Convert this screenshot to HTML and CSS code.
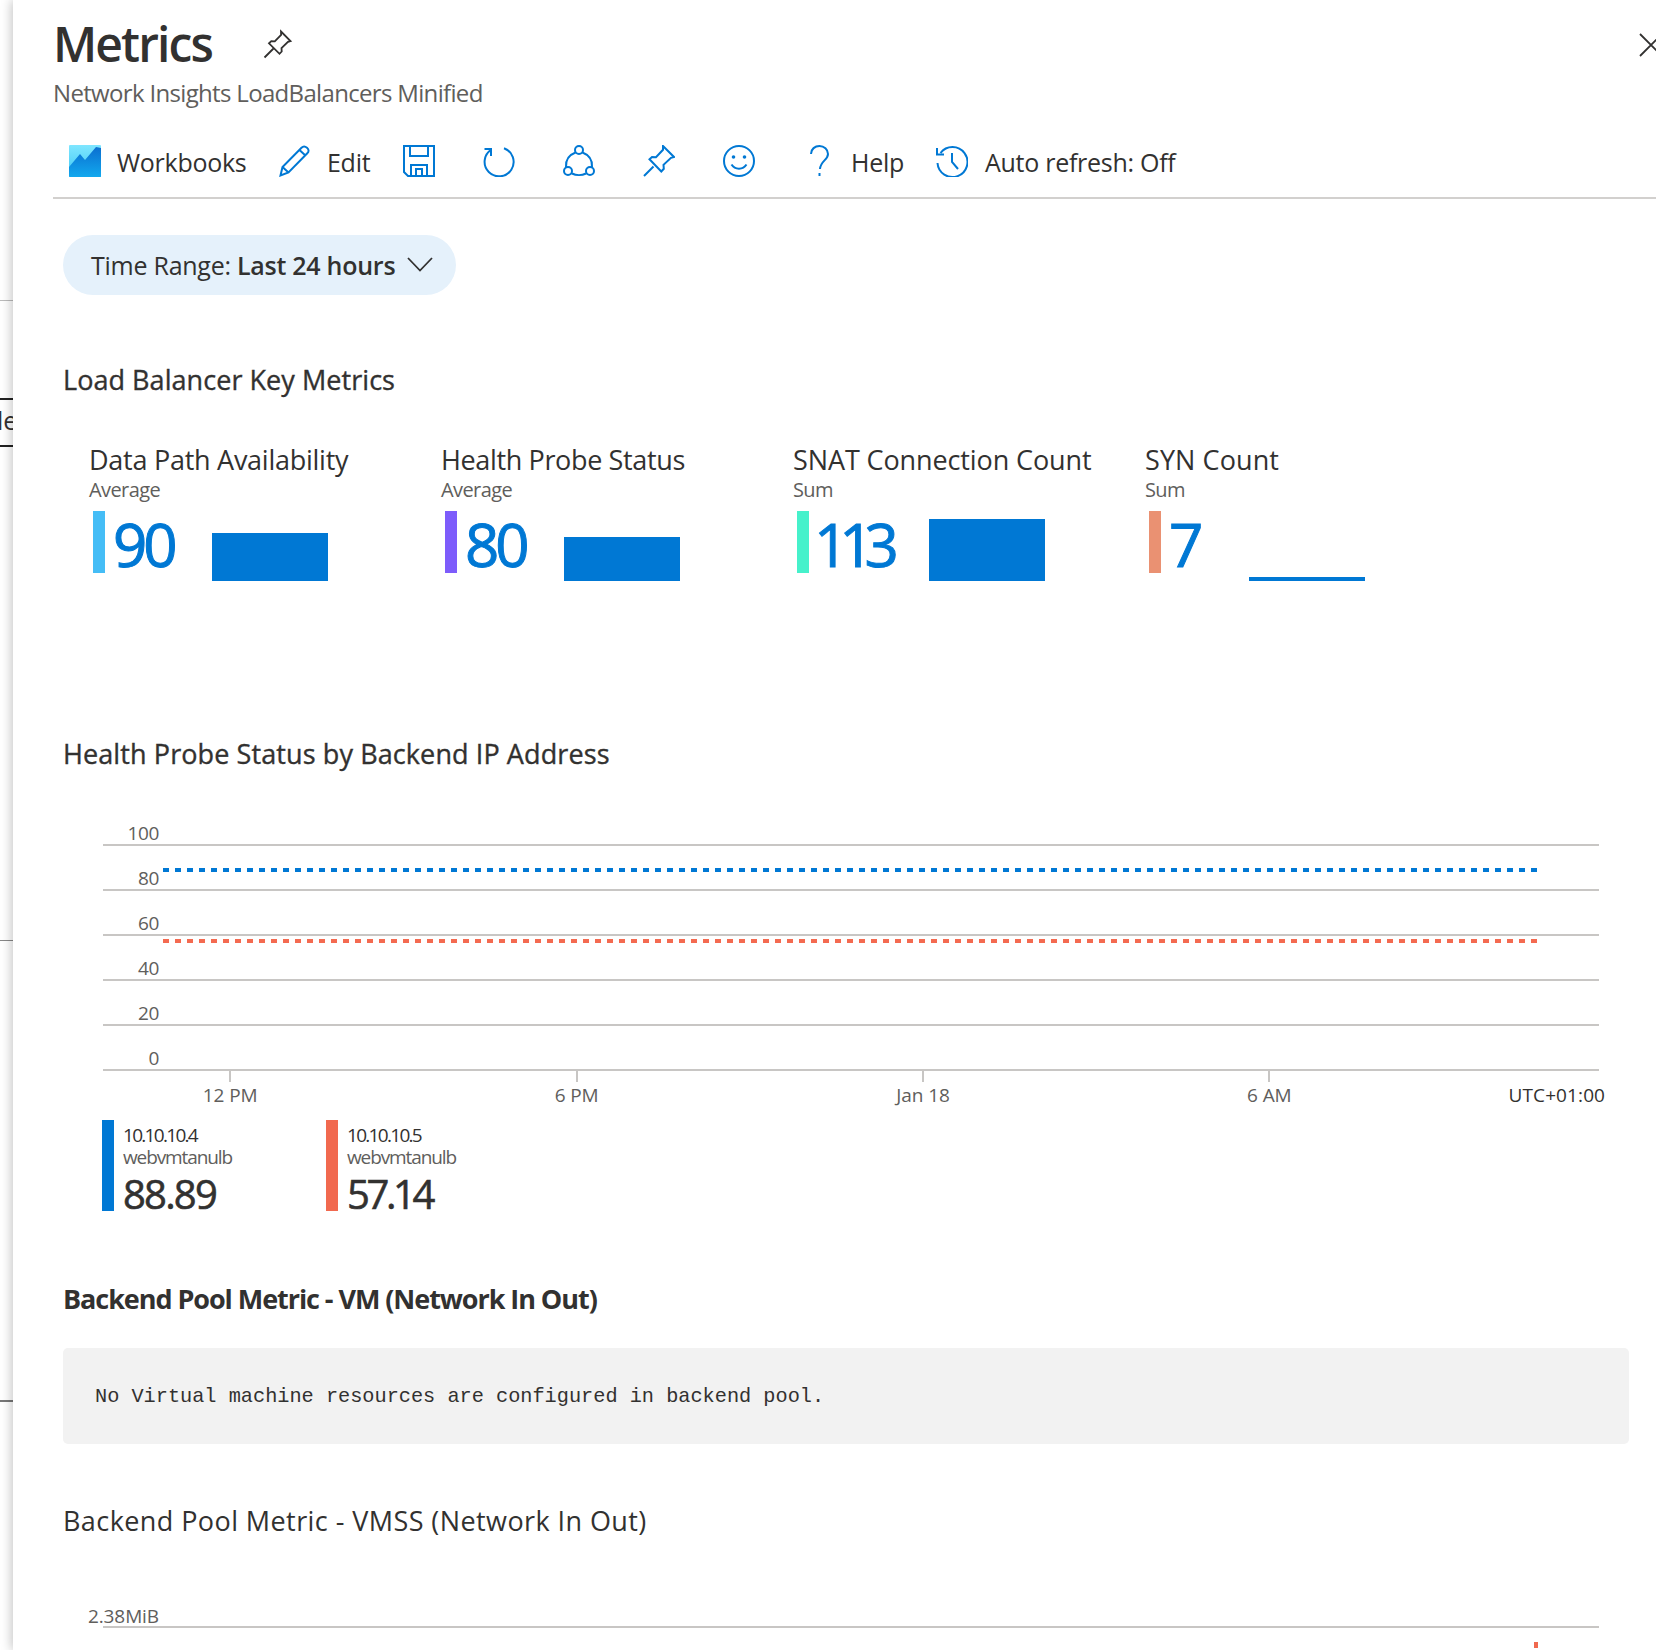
FILE: index.html
```html
<!DOCTYPE html>
<html lang="en">
<head>
<meta charset="utf-8">
<title>Metrics</title>
<link rel="stylesheet" href="styles.css">
</head>
<body>
<div class="page">
  <aside class="behind">
    <div class="rule rule-a"></div>
    <div class="rule rule-b"></div>
    <div class="behind-text">le</div>
    <div class="rule rule-c"></div>
    <div class="rule rule-d"></div>
    <div class="rule rule-e"></div>
  </aside>
  <main class="blade">
    <header class="head">
      <div class="title-row">
        <h1 class="title">Metrics</h1>
        <svg class="pin-title" viewBox="0 0 30 30"><path d="M1.5 28.5 10.5 19.500M18 2.500 27.500 12l-2.500.8-6.500 6.200.2 3.500-2.200 2.300-10.500-10.500 2.300-2.200 3.500.2 6.300-6.500z" fill="none" stroke="#323130" stroke-width="1.800"/></svg>
        <svg class="close" viewBox="0 0 24 24"><path d="M1 1 23 23M23 1 1 23" fill="none" stroke="#323130" stroke-width="1.800"/></svg>
      </div>
      <p class="subtitle">Network Insights LoadBalancers Minified</p>
    </header>
    <nav class="toolbar">
      <svg class="ic ic-wb" viewBox="0 0 32 32">
        <defs>
          <linearGradient id="wbtop" x1="0" y1="0" x2="0" y2="1"><stop offset="0" stop-color="#7fe6ff"/><stop offset="1" stop-color="#3cc8f4"/></linearGradient>
          <linearGradient id="wbbot" x1="0" y1="0" x2="0" y2="1"><stop offset="0" stop-color="#0b6fd0"/><stop offset="1" stop-color="#12a8ee"/></linearGradient>
        </defs>
        <path d="M1 0H31a1 1 0 0 1 1 1V32H1a1 1 0 0 1-1-1V1a1 1 0 0 1 1-1z" fill="url(#wbtop)"/>
        <path d="M0 22 11 9l5 6L27 2l5 1V31a1 1 0 0 1-1 1H1a1 1 0 0 1-1-1z" fill="url(#wbbot)"/>
      </svg>
      <span class="tb-text t-workbooks">Workbooks</span>
      <svg class="ic ic-edit" viewBox="0 0 32 32"><path d="M1.500 30.500 3.500 22 22.500 2.800c1.700-1.700 3.500-1.700 5.500 0s2 3.800 .3 5.500L9.500 27.500zM3.500 22l6 5.500M20.500 5l6.500 6" fill="none" stroke="#0078d4" stroke-width="2"/></svg>
      <span class="tb-text t-edit">Edit</span>
      <svg class="ic ic-save" viewBox="0 0 32 32"><path d="M1 1H31V31H5L1 27zM7 1V11H25V1M8 31V20H24V31M13 31V24H19V31" fill="none" stroke="#0078d4" stroke-width="2"/></svg>
      <svg class="ic ic-refresh" viewBox="0 0 32 32"><path d="M21 3.200A14.500 14.500 0 1 1 8.500 4.500M8 11V4H1.500" fill="none" stroke="#0078d4" stroke-width="2"/></svg>
      <svg class="ic ic-share" viewBox="0 0 32 32"><g fill="none" stroke="#0078d4" stroke-width="2"><circle cx="16" cy="5" r="4"/><circle cx="5" cy="26" r="4"/><circle cx="27" cy="26" r="4"/><path d="M9 28.500C13 30.500 19 30.500 23 28.500M3 22C2.500 15 6 10 12.500 7.500M29 22C29.500 15 26 10 19.500 7.500"/></g></svg>
      <svg class="ic ic-pin" viewBox="0 0 32 32"><path d="M1 31 10.500 21.500M20 1 31 12l-3 .8-7.500 7 .3 4-2.500 2.700L6.500 14.200 9 12l4 .3 7-7.500z" fill="none" stroke="#0078d4" stroke-width="2"/></svg>
      <svg class="ic ic-smile" viewBox="0 0 32 32"><g fill="none" stroke="#0078d4" stroke-width="2"><circle cx="16" cy="16" r="15"/><path d="M8.500 19.500c3.500 5.500 11.500 5.500 15 0"/></g><circle cx="10.500" cy="12" r="1.800" fill="#0078d4"/><circle cx="21.500" cy="12" r="1.800" fill="#0078d4"/></svg>
      <svg class="ic-help" viewBox="0 0 21 32"><path d="M2 9C2 4 6 1 10.500 1S19 4.500 19 9c0 6-7.500 7-8 15M10.500 28v3" fill="none" stroke="#0078d4" stroke-width="2"/></svg>
      <span class="tb-text t-help">Help</span>
      <svg class="ic ic-clock" viewBox="0 0 32 32"><path d="M4.500 8A15 15 0 1 1 1.500 18M1 3V9.500H8M16 8V17L22 24" fill="none" stroke="#0078d4" stroke-width="2"/></svg>
      <span class="tb-text t-auto">Auto refresh: Off</span>
    </nav>

    <section class="content">
      <div class="pill">
        <span class="pill-text">Time Range: <b>Last 24 hours</b></span>
        <svg class="chev" viewBox="0 0 26 15"><path d="M1 1 13 13.500 25 1" fill="none" stroke="#323130" stroke-width="1.800"/></svg>
      </div>

      <h2 class="heading h-key">Load Balancer Key Metrics</h2>
      <div class="tiles">
        <div class="tile">
          <div class="tile-title">Data Path Availability</div>
          <div class="tile-sub">Average</div>
          <div class="tile-row">
            <span class="accent a-sky"></span>
            <span class="val">90</span>
            <span class="spark s-90"></span>
          </div>
        </div>
        <div class="tile">
          <div class="tile-title tt-health">Health Probe Status</div>
          <div class="tile-sub">Average</div>
          <div class="tile-row">
            <span class="accent a-violet"></span>
            <span class="val">80</span>
            <span class="spark s-80"></span>
          </div>
        </div>
        <div class="tile">
          <div class="tile-title tt-snat">SNAT Connection Count</div>
          <div class="tile-sub">Sum</div>
          <div class="tile-row">
            <span class="accent a-mint"></span>
            <span class="val val-tight">113</span>
            <span class="spark s-113"></span>
          </div>
        </div>
        <div class="tile">
          <div class="tile-title tt-syn">SYN Count</div>
          <div class="tile-sub">Sum</div>
          <div class="tile-row">
            <span class="accent a-salmon"></span>
            <span class="val val-one">7</span>
            <span class="spark s-7"></span>
          </div>
        </div>
      </div>

      <h2 class="heading h-health">Health Probe Status by Backend IP Address</h2>
      <div class="chart chart-health">
        <div class="grid-row"><span>100</span></div>
        <div class="grid-row"><span>80</span></div>
        <div class="grid-row"><span>60</span></div>
        <div class="grid-row"><span>40</span></div>
        <div class="grid-row"><span>20</span></div>
        <div class="grid-row"><span>0</span></div>
        <div class="dots dots-blue"></div>
        <div class="dots dots-red"></div>
      </div>
      <div class="axis">
        <span class="tick">12 PM</span>
        <span class="tick">6 PM</span>
        <span class="tick">Jan 18</span>
        <span class="tick">6 AM</span>
        <span class="utc">UTC+01:00</span>
      </div>
      <div class="legend">
        <div class="leg">
          <span class="leg-bar lb-blue"></span>
          <div class="leg-body">
            <div class="leg-ip">10.10.10.4</div>
            <div class="leg-name">webvmtanulb</div>
            <div class="leg-val">88.89</div>
          </div>
        </div>
        <div class="leg">
          <span class="leg-bar lb-red"></span>
          <div class="leg-body">
            <div class="leg-ip">10.10.10.5</div>
            <div class="leg-name">webvmtanulb</div>
            <div class="leg-val leg-val-tight">57.14</div>
          </div>
        </div>
      </div>

      <h2 class="heading heading-bold h-vm">Backend Pool Metric - VM (Network In Out)</h2>
      <pre class="code">No Virtual machine resources are configured in backend pool.</pre>

      <h2 class="heading h-vmss">Backend Pool Metric - VMSS (Network In Out)</h2>
      <div class="chart chart-vmss">
        <div class="grid-row grid-row-mib"><span>2.38MiB</span></div>
        <div class="spike"></div>
      </div>
    </section>
  </main>
</div>
</body>
</html>
```
FILE: styles.css
```css
* { box-sizing: border-box; }
html, body { margin: 0; padding: 0; height: 1650px; overflow: hidden; background: #fff; }
body { font-family: "Open Sans", "Noto Sans", sans-serif; color: #323130; }

.page { display: flex; width: 1656px; height: 1650px; overflow: hidden; }

/* strip of the page behind the blade */
.behind { width: 13px; flex: none; background: #fff; overflow: hidden; }
.rule { height: 1px; background: #bbb; }
.rule-a { margin-top: 300px; }
.rule-b { margin-top: 97px; height: 2px; background: #222; }
.behind-text { font-size: 25px; line-height: 41px; height: 45px; margin-left: -3px; }
.rule-c { height: 2px; background: #222; }
.rule-d { margin-top: 493px; background: #888; }
.rule-e { margin-top: 459px; height: 2px; background: #777; }

.blade {
  flex: 1;
  min-width: 0;
  height: 1650px;
  background: #fff;
  overflow: hidden;
  box-shadow: -2px 0 10px rgba(0, 0, 0, .22);
  position: relative;
  padding-left: 40px;
}

.head { padding-top: 14px; }
.title-row { display: flex; align-items: center; height: 60px; }
.title { margin: 0; font-size: 48px; line-height: 60px; font-weight: 600; letter-spacing: -1.9px; color: #323130; }
.pin-title { width: 30px; height: 30px; margin-left: 51px; flex: none; }
.close { width: 24px; height: 24px; flex: none; margin-left: auto; margin-right: -7px; margin-top: 2px; }
.subtitle { margin: 4px 0 0 0; font-size: 24px; line-height: 30px; letter-spacing: -.67px; color: #605e5c; height: 30px; }

.toolbar { display: flex; align-items: center; padding: 37px 0 20px 0; border-bottom: 2px solid #d2d0ce; box-sizing: content-box; height: 32px; }
.ic { width: 32px; height: 32px; flex: none; }
.ic-wb { margin-left: 16px; }
.tb-text { font-size: 25px; line-height: 32px; letter-spacing: -.27px; color: #323130; white-space: nowrap; padding-top: 2px; }
.t-workbooks { margin-left: 16px; width: 130px; }
.ic-edit { margin-left: 32px; }
.t-edit { margin-left: 16px; width: 44px; }
.ic-save { margin-left: 32px; }
.ic-refresh { margin-left: 48px; }
.ic-share { margin-left: 48px; }
.ic-pin { margin-left: 48px; }
.ic-smile { margin-left: 48px; }
.ic-help { width: 21px; height: 32px; flex: none; margin-left: 54px; }
.t-help { margin-left: 21px; width: 53px; }
.ic-clock { margin-left: 32px; }
.t-auto { margin-left: 17px; }

.content { padding-left: 10px; }

.pill {
  display: inline-flex;
  align-items: center;
  width: 393px;
  height: 60px;
  margin-top: 36px;
  padding-left: 28px;
  border-radius: 30px;
  background: #e5f1fb;
  vertical-align: top;
}
.pill-text { font-size: 25px; letter-spacing: -.26px; width: 316px; white-space: nowrap; }
.pill-text b { font-weight: 600; }
.chev { width: 26px; height: 15px; flex: none; margin-top: -1px; }

.heading { margin: 0; height: 40px; font-size: 27px; line-height: 40px; font-weight: 400; -webkit-text-stroke: .35px #323130; color: #323130; white-space: nowrap; }
.heading-bold { font-weight: 700; letter-spacing: -1.06px; -webkit-text-stroke: 0; }
.h-key { margin-top: 65px; letter-spacing: .05px; }
.h-health { margin-top: 153px; letter-spacing: .1px; }
.h-vm { margin-top: 68px; }
.h-vmss { margin-top: 57px; letter-spacing: .42px; -webkit-text-stroke: 0; }

.tiles { display: grid; grid-template-columns: repeat(4, 352px); margin-top: 42px; padding-left: 26px; }
.tile-title { font-size: 27px; line-height: 36px; height: 36px; letter-spacing: -.26px; white-space: nowrap; font-weight: 400; color: #323130; }
.tt-health { letter-spacing: -.36px; }
.tt-snat { letter-spacing: -.11px; }
.tt-syn { letter-spacing: .09px; }
.tile-sub { font-size: 20px; line-height: 24px; height: 24px; letter-spacing: -.6px; color: #605e5c; }
.tile-row { display: flex; align-items: flex-start; height: 70px; margin-top: 9px; margin-left: 4px; }
.accent { width: 12px; height: 62px; flex: none; }
.a-sky { background: #45bdf6; }
.a-violet { background: #7d5cfb; }
.a-mint { background: #46f1cb; }
.a-salmon { background: #ea9172; }
.val { font-size: 60px; line-height: 66px; margin-left: 8px; margin-right: 38px; letter-spacing: -4px; color: #0078d4; font-weight: 400; -webkit-text-stroke: 1px #0078d4; }
.val-tight { letter-spacing: -9px; margin-left: 5px; margin-right: 39px; }
.val-one { margin-right: 50px; }
.spark { width: 116px; background: #0078d4; flex: none; align-self: flex-end; }
.s-90 { height: 48px; }
.s-80 { height: 44px; }
.s-113 { height: 62px; }
.s-7 { height: 4px; }

.chart { position: relative; margin-left: 40px; width: 1496px; }
.chart-health { margin-top: 27px; }
.chart-vmss { margin-top: 42px; }
.grid-row { height: 45px; border-bottom: 2px solid #c8c6c4; display: flex; justify-content: flex-end; width: 100%; padding-right: 1440px; align-items: flex-end; }
.grid-row span { font-size: 19px; line-height: 26px; margin-bottom: -2px; letter-spacing: -.35px; color: #605e5c; white-space: nowrap; }
.grid-row-mib span { letter-spacing: -.1px; margin-bottom: -3px; }

.dots { position: absolute; left: 60px; width: 1374px; height: 4px; }
.dots-blue { top: 67px; background: repeating-linear-gradient(90deg, #0078d4 0 6px, transparent 6px 12px); }
.dots-red { top: 138px; background: repeating-linear-gradient(90deg, #f46a50 0 6px, transparent 6px 12px); }
.spike { position: absolute; left: 1431px; top: 59px; width: 4px; height: 6px; background: #f0694f; }

.axis { display: flex; height: 37px; margin-left: -6px; font-size: 19px; color: #605e5c; letter-spacing: -.1px; }
.tick { width: 346.4px; text-align: center; position: relative; padding-top: 11px; line-height: 26px; flex: none; white-space: nowrap; }
.tick::before { content: ""; position: absolute; left: 50%; top: 0; width: 2px; height: 11px; margin-left: -1px; background: #c8c6c4; }
.utc { margin-left: 66px; padding-top: 11px; line-height: 26px; color: #323130; white-space: nowrap; letter-spacing: .1px; }

.legend { display: flex; margin-top: 12px; margin-left: 39px; height: 91px; }
.leg { display: flex; width: 224px; }
.leg-bar { width: 12px; height: 91px; flex: none; }
.lb-blue { background: #0078d4; }
.lb-red { background: #f1694f; }
.leg-body { margin-left: 9px; padding-top: 4px; }
.leg-ip { font-size: 19px; line-height: 22px; letter-spacing: -1.7px; color: #323130; white-space: nowrap; }
.leg-name { font-size: 19px; line-height: 22px; letter-spacing: -1.1px; color: #605e5c; white-space: nowrap; }
.leg-val { font-size: 40px; line-height: 52px; letter-spacing: -1.8px; font-weight: 400; -webkit-text-stroke: .6px #323130; color: #323130; white-space: nowrap; }
.leg-val-tight { letter-spacing: -3.4px; }

.code {
  margin: 29px 0 0 0;
  width: 1566px;
  height: 96px;
  padding: 0 0 0 32px;
  background: #f2f2f2;
  border-radius: 5px;
  font-family: "Liberation Mono", monospace;
  font-size: 20.25px;
  line-height: 98px;
  color: #323130;
}
```
